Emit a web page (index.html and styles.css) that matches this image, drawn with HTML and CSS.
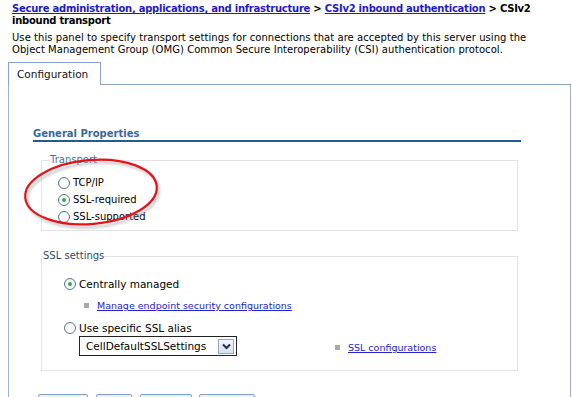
FILE: index.html
```html
<!DOCTYPE html>
<html>
<head>
<meta charset="utf-8">
<title>CSIv2 inbound transport</title>
<link rel="stylesheet" href="styles.css">
</head>
<body>
<div class="page">
  <div class="crumbs"><a href="#">Secure administration, applications, and infrastructure</a> &gt; <a href="#">CSIv2 inbound authentication</a> &gt; CSIv2<br>inbound transport</div>
  <p class="desc">Use this panel to specify transport settings for connections that are accepted by this server using the<br>Object Management Group (OMG) Common Secure Interoperability (CSI) authentication protocol.</p>
  <div class="tabbar">
    <div class="tab">Configuration</div>
    <div class="tab-rest"></div>
  </div>
  <div class="panel">
    <h2 class="section">General Properties</h2>
    <fieldset class="group transport">
      <legend>Transport</legend>
      <div class="opt"><span class="radio"></span><span>TCP/IP</span></div>
      <div class="opt"><span class="radio on"></span><span>SSL-required</span></div>
      <div class="opt"><span class="radio"></span><span>SSL-supported</span></div>
    </fieldset>
    <fieldset class="group ssl">
      <legend>SSL settings</legend>
      <div class="opt big"><span class="radio on"></span><span>Centrally managed</span></div>
      <div class="linkrow first"><span class="sq"></span><a href="#">Manage endpoint security configurations</a></div>
      <div class="opt big alias"><span class="radio"></span><span>Use specific SSL alias</span></div>
      <div class="aliasrow">
        <div class="select"><span class="sel-text">CellDefaultSSLSettings</span><span class="sel-btn"><svg width="11" height="9" viewBox="0 0 11 9"><path d="M2 2.5 L5.5 6 L9 2.5" fill="none" stroke="#1d2f57" stroke-width="2"/></svg></span></div>
        <div class="linkrow"><span class="sq"></span><a href="#">SSL configurations</a></div>
      </div>
    </fieldset>
    <div class="buttons">
      <span class="btn b1"></span><span class="btn b2"></span><span class="btn b3"></span><span class="btn b4"></span>
    </div>
  </div>
  <svg class="annot" width="150" height="90" viewBox="0 0 150 90">
    <ellipse cx="71" cy="40" rx="66" ry="32" transform="rotate(-5 71 40)" fill="none" stroke="#8c8c8c" stroke-opacity="0.45" stroke-width="2.5" style="filter:blur(1px)" />
    <ellipse cx="69" cy="37" rx="66" ry="32" transform="rotate(-5 69 37)" fill="none" stroke="#e3131b" stroke-width="2.2"/>
  </svg>
</div>
</body>
</html>
```
FILE: styles.css
```css
html, body {
  margin: 0;
  padding: 0;
  background: #ffffff;
}
body {
  font-family: "DejaVu Sans", Verdana, sans-serif;
  font-size: 10px;
  color: #000;
}
.page {
  position: relative;
  width: 572px;
  height: 397px;
  overflow: hidden;
}
.crumbs {
  padding: 3px 0 0 12px;
  line-height: 12px;
  font-weight: bold;
  white-space: nowrap;
  letter-spacing: -0.25px;
}
.crumbs a {
  color: #1c1cc4;
}
.desc {
  margin: 5px 0 0 12px;
  line-height: 12px;
  white-space: nowrap;
  letter-spacing: 0.05px;
}
.tabbar {
  display: flex;
  margin: 6px 1px 0 8px;
  height: 23px;
}
.tab {
  padding-left: 8px;
  border: 1px solid #88a4c8;
  border-bottom: none;
  line-height: 22px;
  font-size: 10.5px;
  color: #111;
  box-sizing: border-box;
  width: 93px;
}
.tab-rest {
  flex: 1;
  border-bottom: 1px solid #88a4c8;
}
.panel {
  margin: 0 1px 0 8px;
  height: 400px;
  border-left: 1px solid #9db3cf;
  border-right: 1px solid #9db3cf;
  padding-left: 24px;
}
.section {
  margin: 0;
  padding-top: 43px;
  width: 488px;
  line-height: 12px;
  font-size: 10px;
  font-weight: bold;
  color: #3a6898;
  border-bottom: 2px solid #1f5b94;
  padding-bottom: 0;
}
.group {
  margin: 0 0 0 8px;
  width: 477px;
  box-sizing: border-box;
  border: 1px solid #e3e3e3;
  padding: 0;
  min-width: 0;
}
.group legend {
  padding: 0;
  line-height: 12px;
  font-size: 10px;
}
.transport {
  margin-top: 12px;
  padding: 8px 0 5px 16px;
}
.transport legend {
  color: #4670a3;
  margin-left: -8px;
}
.ssl {
  margin-top: 19px;
  padding: 13px 0 14px 22px;
}
.ssl legend {
  color: #2b4b72;
  margin-left: -21px;
}
.opt {
  display: flex;
  align-items: center;
  height: 17px;
  gap: 3px;
}
.opt.big {
  font-size: 10.5px;
}
.radio {
  width: 10px;
  height: 10px;
  border: 1px solid #5a7894;
  border-radius: 50%;
  background: radial-gradient(circle at 60% 65%, #ffffff 40%, #dfe4ea 100%);
  position: relative;
  flex: none;
}
.radio.on::after {
  content: "";
  position: absolute;
  left: 3px;
  top: 3px;
  width: 4px;
  height: 4px;
  border-radius: 50%;
  background: #2fae3c;
}
.linkrow {
  display: flex;
  align-items: center;
  height: 17px;
  gap: 8px;
}
.linkrow.first {
  margin: 5px 0 0 20px;
}
.linkrow a {
  color: #2323d2;
  font-size: 9.5px;
}
.sq {
  width: 5px;
  height: 5px;
  background: #a9a9a9;
  flex: none;
}
.alias {
  margin-top: 5px;
}
.aliasrow {
  display: flex;
  align-items: center;
  margin: 0 0 0 15px;
}
.select {
  display: flex;
  align-items: center;
  justify-content: space-between;
  width: 148px;
  height: 18px;
  border: 1px solid #222;
  padding: 0 2px 0 6px;
  box-sizing: content-box;
  font-size: 10.5px;
}
.sel-btn {
  width: 14px;
  height: 13px;
  border: 1px solid #9aa7ba;
  background: linear-gradient(#f4f6fa, #d9e0ea);
  display: flex;
  align-items: center;
  justify-content: center;
}
.aliasrow .linkrow {
  margin: 2px 0 0 98px;
  gap: 8px;
}
.buttons {
  display: flex;
  margin-top: 23px;
  padding-left: 5px;
}
.btn {
  height: 20px;
  border: 1px solid #7b9cc6;
  background: linear-gradient(#eef3fa, #d6e1ef);
  border-radius: 2px;
}
.b1 { width: 48px; }
.b2 { width: 34px; margin-left: 8px; }
.b3 { width: 50px; margin-left: 8px; }
.b4 { width: 54px; margin-left: 7px; }
.annot {
  position: absolute;
  left: 22px;
  top: 155px;
}
```
